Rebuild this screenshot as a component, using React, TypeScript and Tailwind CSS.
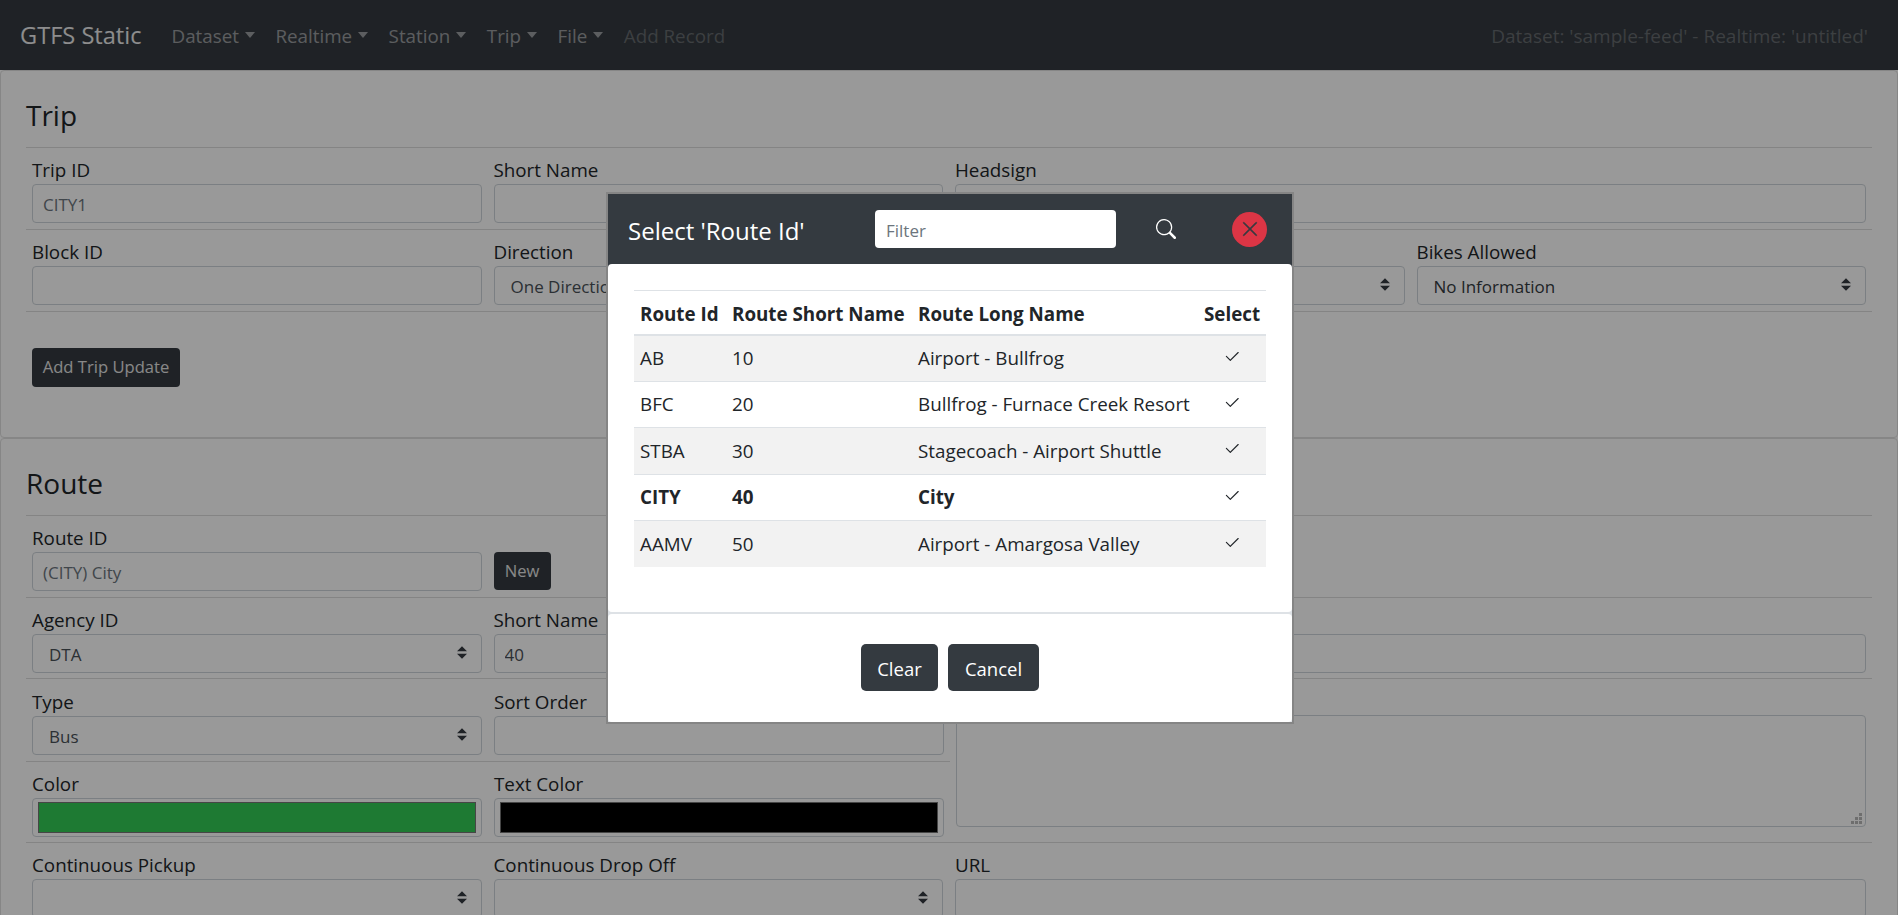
import { BsCheck2, BsSearch, BsXLg } from "react-icons/bs";

const font = "[font-family:'Open_Sans','Noto_Sans',sans-serif]";

function Arrows() {
    return (
        <svg width="10" height="13" viewBox="0 0 4 5" className="shrink-0 -mt-[2px]">
            <path fill="#343a40" d="M2 0L0 2h4zm0 5L0 3h4z" />
        </svg>
    );
}

function Label({ children }: { children?: string }) {
    return <label className="block h-[27px] leading-[27px] text-[#212529] whitespace-nowrap">{children}</label>;
}

function TextField({ label, value = "", muted = false }: { label?: string; value?: string; muted?: boolean }) {
    return (
        <div>
            <Label>{label}</Label>
            <input
                readOnly
                value={value}
                className={`block w-full h-[39px] pt-[2px] px-[10px] border border-[#ced4da] rounded-[4px] text-[17px] outline-none ${muted ? "text-[#6c757d]" : "text-[#495057]"}`}
            />
        </div>
    );
}

function SelectField({ label, value = "", dark = false }: { label?: string; value?: string; dark?: boolean }) {
    return (
        <div>
            <Label>{label}</Label>
            <div className="flex items-center justify-between h-[39px] pl-4 pr-[14px] border border-[#ced4da] rounded-[4px] text-[17px]">
                <span className={`pt-[2px] ${dark ? "text-[#343a40]" : "text-[#495057]"}`}>{value}</span>
                <Arrows />
            </div>
        </div>
    );
}

function ColorField({ label, color }: { label: string; color: string }) {
    return (
        <div>
            <Label>{label}</Label>
            <div className="h-[39px] px-[5px] py-[3px] border border-[#ced4da] rounded-[4px]">
                <div className={`h-full border border-[#767676] ${color}`} />
            </div>
        </div>
    );
}

function Divider() {
    return <hr className="border-0 h-px bg-[#dcdcdc]" />;
}

function Row({ children }: { children: React.ReactNode }) {
    return <div className="grid grid-cols-4 gap-x-3 px-1.5 pt-[9px] pb-[6px]">{children}</div>;
}

function Nav({ children }: { children: string }) {
    return (
        <div className="flex items-center text-white/50">
            {children}
            <span className="ml-[6px] -mt-[3px] w-0 h-0 border-x-[5.4px] border-t-[6px] border-x-transparent border-t-white/50" />
        </div>
    );
}

const routes = [
    ["AB", "10", "Airport - Bullfrog"],
    ["BFC", "20", "Bullfrog - Furnace Creek Resort"],
    ["STBA", "30", "Stagecoach - Airport Shuttle"],
    ["CITY", "40", "City"],
    ["AAMV", "50", "Airport - Amargosa Valley"],
];

export default function App() {
    return (
        <div className={`relative h-[915px] overflow-hidden bg-white text-[18.8px] ${font}`}>
            {/* Navbar */}
            <nav className="flex items-center h-[70px] pt-[2px] pl-5 pr-[30px] bg-[#343a40]">
                <span className="mr-[30px] text-[23.6px] text-white/90">GTFS Static</span>
                <div className="flex gap-[20.5px]">
                    <Nav>Dataset</Nav>
                    <Nav>Realtime</Nav>
                    <Nav>Station</Nav>
                    <Nav>Trip</Nav>
                    <Nav>File</Nav>
                    <span className="text-white/25">Add Record</span>
                </div>
                <span className="ml-auto text-[19px] text-white/25">Dataset: 'sample-feed' - Realtime: 'untitled'</span>
            </nav>

            {/* Trip card */}
            <section className="h-[368px] px-[25px] pt-[27px] border border-[#dfdfdf] rounded-[4px]">
                <h3 className="h-[34px] mb-[15px] text-[28px] leading-[34px] text-[#212529]">Trip</h3>
                <Divider />
                <Row>
                    <TextField label="Trip ID" value="CITY1" muted />
                    <TextField label="Short Name" />
                    <div className="col-span-2">
                        <TextField label="Headsign" />
                    </div>
                </Row>
                <Divider />
                <Row>
                    <TextField label="Block ID" />
                    <SelectField label="Direction" value="One Direction" />
                    <SelectField label="Wheelchair" value="No Information" />
                    <SelectField label="Bikes Allowed" value="No Information" dark />
                </Row>
                <Divider />
                <button className="block h-[39px] w-[148px] mt-[36px] ml-1.5 rounded-[4px] bg-[#343a40] text-[16.6px] text-[#e3e3e3]">
                    Add Trip Update
                </button>
            </section>

            {/* Route card */}
            <section className="px-[25px] pt-[27px] border border-[#dfdfdf] rounded-[4px]">
                <h3 className="h-[34px] mb-[15px] text-[28px] leading-[34px] text-[#212529]">Route</h3>
                <Divider />
                <Row>
                    <TextField label="Route ID" value="(CITY) City" muted />
                    <div>
                        <Label />
                        <button className="h-[38px] w-[57px] rounded-[4px] bg-[#343a40] text-[16.6px] text-[#e3e3e3]">New</button>
                    </div>
                </Row>
                <Divider />
                <div className="grid grid-cols-4 gap-x-3 px-1.5 pt-[9px] pb-[5px]">
                    <SelectField label="Agency ID" value="DTA" />
                    <TextField label="Short Name" value="40" />
                    <div className="col-span-2">
                        <TextField label="Long Name" value="City" />
                    </div>
                </div>
                <div className="flex">
                    <div className="w-[924px]">
                        <Divider />
                        <div className="grid grid-cols-2 gap-x-3 px-1.5 pt-[10px] pb-[6px]">
                            <SelectField label="Type" value="Bus" />
                            <TextField label="Sort Order" />
                        </div>
                        <Divider />
                        <div className="grid grid-cols-2 gap-x-3 px-1.5 pt-[9px] pb-[5px]">
                            <ColorField label="Color" color="bg-[#33cc55]" />
                            <ColorField label="Text Color" color="bg-black" />
                        </div>
                    </div>
                    <div className="flex-1 px-1.5">
                        <div className="h-px bg-[#dcdcdc] -mx-1.5" />
                        <div className="pt-[9px]">
                            <Label>Description</Label>
                            <div className="relative h-[112px] border border-[#ced4da] rounded-[4px]">
                                <svg width="11" height="11" viewBox="0 0 11 11" className="absolute right-[3px] bottom-[2px]">
                                    <path fill="#b7b7b7" d="M0 8h3v3H0zM4 8h3v3H4zM8 8h3v3H8zM4 4h3v3H4zM8 4h3v3H8zM8 0h3v3H8z" />
                                </svg>
                            </div>
                        </div>
                    </div>
                </div>
                <Divider />
                <Row>
                    <SelectField label="Continuous Pickup" />
                    <SelectField label="Continuous Drop Off" />
                    <div className="col-span-2">
                        <TextField label="URL" />
                    </div>
                </Row>
            </section>

            {/* Backdrop */}
            <div className="absolute inset-0 bg-black/40" />

            {/* Modal */}
            <div className="absolute left-[606px] top-[192px] w-[688px] border-2 border-[#858585] bg-[#dee2e6]">
                <header className="flex items-center h-[74px] pb-1 pl-5 bg-[#343a40]">
                    <h5 className="w-[247px] pt-1 text-[24px] text-white whitespace-nowrap">Select 'Route Id'</h5>
                    <input
                        placeholder="Filter"
                        className="w-[241px] h-[38px] pt-[2px] px-[11px] rounded-[4px] bg-white text-[17px] text-[#495057] placeholder:text-[#6c757d] outline-none"
                    />
                    <BsSearch size={20} className="ml-10 text-white" />
                    <div className="flex items-center justify-center w-[35px] h-[35px] ml-[56px] rounded-full bg-[#dc3545] text-[#343a40]">
                        <BsXLg size={18} stroke="currentColor" strokeWidth={0.6} />
                    </div>
                </header>
                <div className="relative h-[348px] -mt-1 px-[26px] pt-[26px] rounded-[4px] bg-white text-[#212529]">
                    <table className="w-[632px] table-fixed border-collapse">
                        <thead>
                            <tr className="h-[44px] border-y border-b-2 border-[#dee2e6] font-bold">
                                <th className="w-[92px] pl-1.5 pt-1 text-left">Route Id</th>
                                <th className="w-[186px] pl-1.5 pt-1 text-left whitespace-nowrap">Route Short Name</th>
                                <th className="w-[286px] pl-1.5 pt-1 text-left">Route Long Name</th>
                                <th className="w-[68px] pl-1.5 pt-1 text-left">Select</th>
                            </tr>
                        </thead>
                        <tbody>
                            {routes.map((r, i) => (
                                <tr
                                    key={r[0]}
                                    className={`h-[46.5px] border-t border-[#dee2e6] ${i % 2 === 0 ? "bg-[#f2f2f2]" : ""} ${r[0] === "CITY" ? "font-bold" : ""}`}
                                >
                                    <td className="pl-1.5">{r[0]}</td>
                                    <td className="pl-1.5">{r[1]}</td>
                                    <td className="pl-1.5 whitespace-nowrap">{r[2]}</td>
                                    <td>
                                        <BsCheck2 size={18} className="mb-[3px] ml-[25px]" />
                                    </td>
                                </tr>
                            ))}
                        </tbody>
                    </table>
                </div>
                <footer className="flex justify-center gap-[10px] h-[108px] mt-0.5 pt-[30px] rounded-[4px] bg-white text-[18.5px]">
                    <button className="h-[47px] w-[77px] pt-0.5 rounded-[5px] bg-[#343a40] text-white">Clear</button>
                    <button className="h-[47px] w-[91px] pt-0.5 rounded-[5px] bg-[#343a40] text-white">Cancel</button>
                </footer>
            </div>
        </div>
    );
}
